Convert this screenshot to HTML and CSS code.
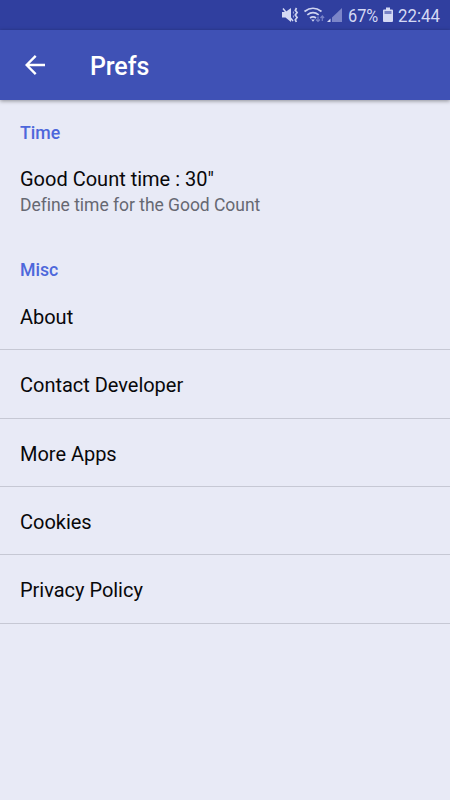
FILE: index.html
```
<!DOCTYPE html>
<html lang="en">
<head>
<meta charset="utf-8">
<title>Prefs</title>
<link rel="stylesheet" href="styles.css">
</head>
<body>
<div class="status">
  <svg class="status-icons" width="64" height="30" viewBox="280 0 64 30">
    <path d="M282 12h3.500l5.500-4v14l-5.500-4.500H282z" fill="#d4d9f4"/>
    <path d="M283 8.500l10 12.500" stroke="#d4d9f4" stroke-width="1.500"/>
    <path d="M296.500 8l-1.200 2.300 1.800 2.300-1.800 2.500 1.800 2.400-1.800 2.300 1 2.200" fill="none" stroke="#cfd4f0" stroke-width="1.700"/>
    <path d="M293.500 11.500v2M293.500 15.500v2" stroke="#9ba5dc" stroke-width="1.200"/>
    <g fill="none" stroke="#cfd4f0" stroke-width="1.700">
      <path d="M304.500 11.500q8.500-6.500 17 0"/>
      <path d="M307.300 14.800q5.700-4.500 11.400 0"/>
      <path d="M310 18q3-2.400 6 0"/>
    </g>
    <path d="M311.200 19.500h3.600l-1.800 2.300z" fill="#cfd4f0"/>
    <path d="M318 16.500v5M316 19.500l2 2 2-2M322.300 21v-5M320.500 18l1.800-2 1.800 2" fill="none" stroke="#7782c8" stroke-width="1.200"/>
    <path d="M342 8v14h-10v-4.500z" fill="#7b85c8"/>
    <path d="M330.500 18.500v3.500H327z" fill="#d4d9f4"/>
  </svg>
  <span class="percent">67%</span>
  <svg class="battery" width="10" height="30" viewBox="0 0 10 30">
    <path d="M3 7.500h4v2h2q1 0 1 1V21q0 1-1 1H1q-1 0-1-1V10.500q0-1 1-1h2z" fill="#d4d9f4"/>
    <path d="M1.500 11h7v3h-7z" fill="#7882c5"/>
  </svg>
  <span class="clock">22:44</span>
</div>
<header class="bar">
  <svg class="back" width="20" height="20" viewBox="0 0 20 20" fill="none" stroke="#fff" stroke-width="2.400">
    <path d="M20 10H2M10.700.9L1.600 10l9.100 9.100"/>
  </svg>
  <h1 class="title">Prefs</h1>
</header>
<main>
  <h2 class="heading">Time</h2>
  <section class="setting">
    <div class="name">Good Count time : 30"</div>
    <div class="summary">Define time for the Good Count</div>
  </section>
  <h2 class="heading">Misc</h2>
  <ul class="list">
    <li class="row">About</li>
    <li class="row">Contact Developer</li>
    <li class="row">More Apps</li>
    <li class="row">Cookies</li>
    <li class="row">Privacy Policy</li>
  </ul>
</main>
</body>
</html>
```
FILE: styles.css
```
* { box-sizing: border-box; }
body {
  margin: 0;
  min-height: 800px;
  background: #e8eaf6;
  font-family: Roboto, sans-serif;
  color: #08080a;
}
.status {
  display: flex;
  height: 30px;
  padding-left: 280px;
  background: #303f9f;
  color: #d4d9f4;
  font-size: 18.5px;
  line-height: 32px;
}
.status-icons, .battery { flex: none; }
.percent, .clock {
  flex: none;
  transform-origin: left;
  white-space: nowrap;
}
.percent {
  width: 35px;
  margin-left: 4px;
  transform: scaleX(.88);
}
.clock {
  margin-left: 5px;
  transform: scaleX(.91);
}
.bar {
  display: flex;
  align-items: center;
  height: 70px;
  padding: 0 25px;
  background: #3f51b5;
  box-shadow: 0 1px 4px rgba(0, 0, 0, .4);
}
.title {
  margin: 3px 0 0 45px;
  color: #fff;
  font-size: 25px;
  font-weight: 500;
  letter-spacing: -.1px;
}
.heading {
  margin: 0;
  height: 65px;
  padding: 22px 20px 0;
  color: #4d67db;
  font-size: 17.7px;
  font-weight: 500;
  line-height: 22px;
}
.setting {
  height: 72px;
  padding: 1px 20px 0;
}
.name {
  font-size: 20px;
  line-height: 26px;
}
.summary {
  padding-top: 1px;
  color: #666872;
  font-size: 17.5px;
  letter-spacing: -.03px;
  line-height: 25px;
}
.list {
  margin: 0;
  padding: 0;
  list-style: none;
}
.row {
  height: 68.4px;
  padding: 0 20px;
  border-bottom: 1px solid #c6c8d4;
  font-size: 20px;
  letter-spacing: -.02px;
  line-height: 70.4px;
}
.row:first-child {
  height: 48.3px;
  line-height: 31px;
}
```
